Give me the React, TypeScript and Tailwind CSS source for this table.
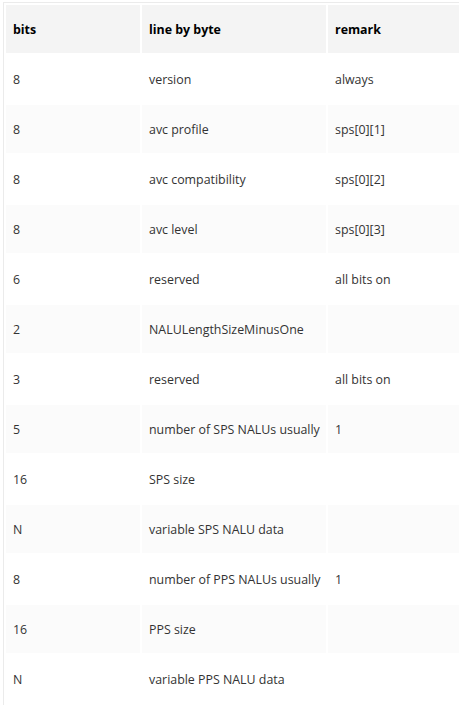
const ROWS: [string, string, string][] = [
  ['8', 'version', 'always'],
  ['8', 'avc profile', 'sps[0][1]'],
  ['8', 'avc compatibility', 'sps[0][2]'],
  ['8', 'avc level', 'sps[0][3]'],
  ['6', 'reserved', 'all bits on'],
  ['2', 'NALULengthSizeMinusOne', ''],
  ['3', 'reserved', 'all bits on'],
  ['5', 'number of SPS NALUs usually', '1'],
  ['16', 'SPS size', ''],
  ['N', 'variable SPS NALU data', ''],
  ['8', 'number of PPS NALUs usually', '1'],
  ['16', 'PPS size', ''],
  ['N', 'variable PPS NALU data', ''],
]

export default function App() {
  return (
    <div className="bg-white pl-[3px] pt-[2px] min-h-screen overflow-hidden font-['Open_Sans',sans-serif] text-[12.4px] text-[#333]">
      <table className="w-[460px] table-fixed border-separate border-spacing-[2px] border border-[#ebebeb]">
        <colgroup>
          <col className="w-[134px]" />
          <col className="w-[184px]" />
          <col />
        </colgroup>
        <thead>
          <tr>
            {['bits', 'line by byte', 'remark'].map(h => (
              <th key={h} className="h-[48px] bg-[#f4f4f4] px-[7px] pt-[2px] text-left font-bold text-black">
                {h}
              </th>
            ))}
          </tr>
        </thead>
        <tbody>
          {ROWS.map((r, i) => (
            <tr key={i}>
              {r.map((c, j) => (
                <td key={j} className={`h-[48px] px-[7px] pt-[3px] whitespace-nowrap ${i % 2 === 1 ? 'bg-[#fbfbfb]' : 'bg-white'}`}>
                  {c}
                </td>
              ))}
            </tr>
          ))}
        </tbody>
      </table>
    </div>
  )
}
